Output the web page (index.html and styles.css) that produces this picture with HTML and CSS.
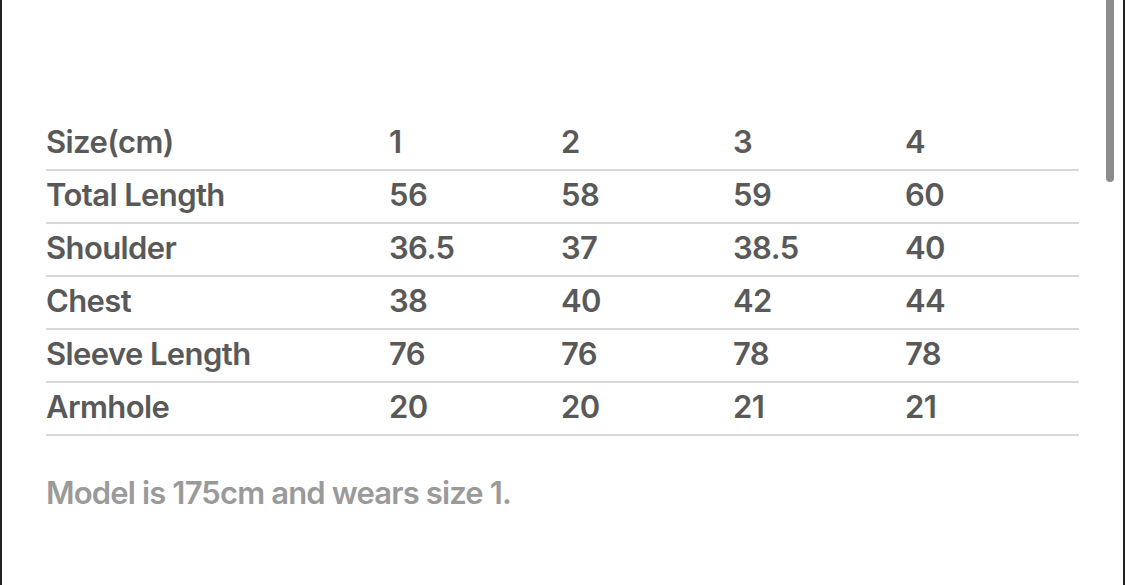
FILE: index.html
```html
<!DOCTYPE html>
<html>
<head>
<meta charset="utf-8">
<link rel="stylesheet" href="styles.css">
</head>
<body>
<div class="frame">
  <div class="content">
    <div class="size-table">
      <div class="row head">
        <div class="label">Size(cm)</div><div>1</div><div>2</div><div>3</div><div>4</div>
      </div>
      <div class="row">
        <div class="label">Total Length</div><div>56</div><div>58</div><div>59</div><div>60</div>
      </div>
      <div class="row">
        <div class="label">Shoulder</div><div>36.5</div><div>37</div><div>38.5</div><div>40</div>
      </div>
      <div class="row">
        <div class="label">Chest</div><div>38</div><div>40</div><div>42</div><div>44</div>
      </div>
      <div class="row">
        <div class="label">Sleeve Length</div><div>76</div><div>76</div><div>78</div><div>78</div>
      </div>
      <div class="row">
        <div class="label">Armhole</div><div>20</div><div>20</div><div>21</div><div>21</div>
      </div>
    </div>
    <p class="note">Model is 175cm and wears size 1.</p>
  </div>
  <div class="scrollbar"></div>
</div>
</body>
</html>
```

FILE: styles.css
```css
html, body {
  margin: 0;
  padding: 0;
  background: #ffffff;
}

.frame {
  position: relative;
  height: 585px;
  box-sizing: border-box;
  border-left: 2px solid #222222;
  border-right: 2px solid #222222;
  background: #ffffff;
  overflow: hidden;
}

.content {
  padding: 118px 0 0 44px;
  font-family: Inter, "Liberation Sans", Arial, sans-serif;
}

.size-table {
  width: 1033px;
  display: flex;
  flex-direction: column;
}

.row {
  display: grid;
  grid-template-columns: 343px 172px 172px 172px 1fr;
  padding: 7px 0 11px;
  border-bottom: 2px solid #d8d8d8;
  font-size: 31px;
  line-height: 33px;
  font-weight: 600;
  color: #595959;
  letter-spacing: -0.6px;
}

.row > div {
  white-space: nowrap;
}

.note {
  margin: 40px 0 0;
  font-size: 31px;
  line-height: 33px;
  font-weight: 600;
  color: #9a9a9a;
  letter-spacing: -0.85px;
}

.scrollbar {
  position: absolute;
  top: -6px;
  left: 1104px;
  width: 8px;
  height: 188px;
  border-radius: 4px;
  background: #8c8c8c;
}
```
